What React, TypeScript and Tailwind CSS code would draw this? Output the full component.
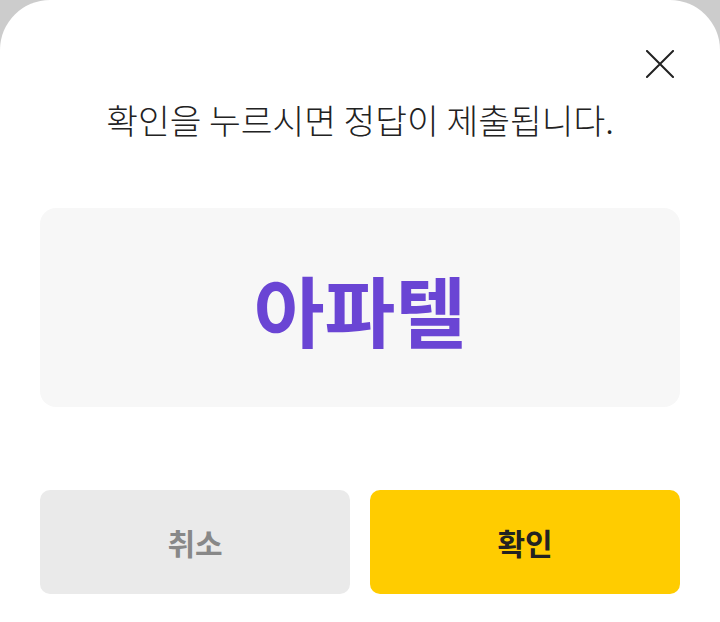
import React from 'react';

const font = { fontFamily: '"Noto Sans CJK KR", "Noto Sans", sans-serif' };

function CloseIcon() {
  return (
    <svg width="28" height="28" viewBox="0 0 28 28" fill="none" stroke="#222222" strokeWidth="2" strokeLinecap="square">
      <path d="M1 1L27 27M27 1L1 27" />
    </svg>
  );
}

export default function App() {
  return (
    <div className="w-full h-[622px] bg-[#cccccc] font-['Noto_Sans_CJK_KR',sans-serif]" style={font}>
      <div className="h-full bg-white rounded-t-[50px] px-10 pt-[44px] flex flex-col">
        <div className="flex justify-end">
          <button className="w-10 h-10 flex items-center justify-center">
            <CloseIcon />
          </button>
        </div>
        <p className="mt-[14px] h-[42px] text-center text-[34.5px] leading-[42px] font-light text-[#222222]">
          확인을 누르시면 정답이 제출됩니다.
        </p>
        <div className="mt-[68px] h-[199px] rounded-2xl bg-[#f7f7f7] flex items-center justify-center">
          <span className="text-[77px] font-bold leading-none text-[#6a45d4] mt-[2px]">아파텔</span>
        </div>
        <div className="mt-[83px] grid grid-cols-2 gap-5">
          <button className="h-[104px] rounded-[10px] bg-[#eaeaea] text-[30px] font-bold text-[#888888]">
            취소
          </button>
          <button className="h-[104px] rounded-[10px] bg-[#ffcc00] text-[30px] font-bold text-[#222222]">
            확인
          </button>
        </div>
      </div>
    </div>
  );
}
